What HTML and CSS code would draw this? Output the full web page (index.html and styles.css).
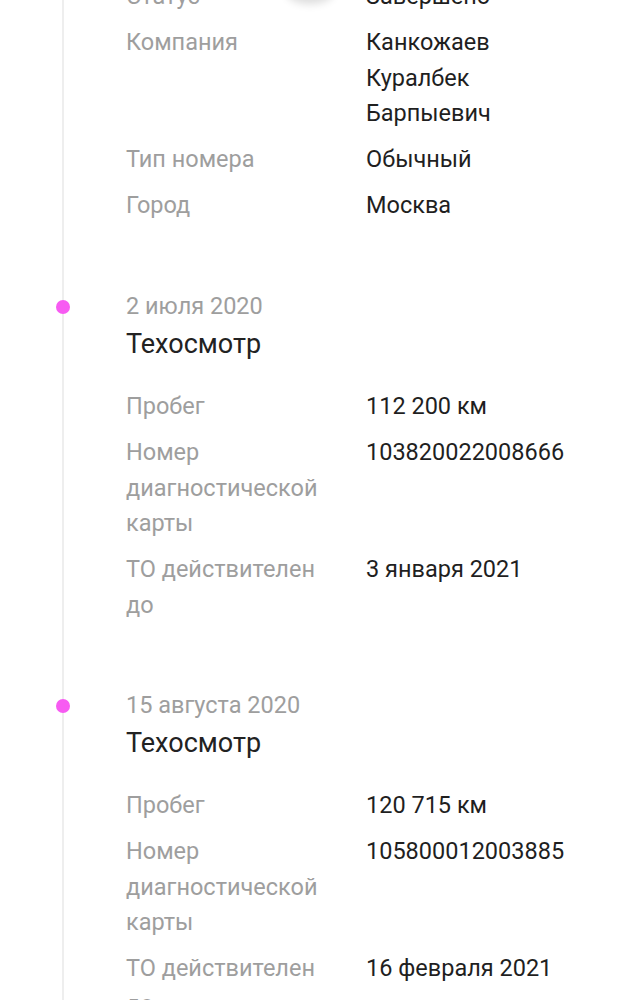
FILE: index.html
```html
<!DOCTYPE html>
<html lang="ru">

<head>
    <meta charset="UTF-8">
    <title>История автомобиля</title>
    <meta name="viewport" content="width=device-width, initial-scale=1.0">
    <link rel="stylesheet" href="styles.css">
</head>

<body>

    <div class="fab-shadow"></div>

    <div class="timeline">

        <section class="event event-first">
            <dl class="details">
                <dt>Статус</dt>
                <dd>Завершено</dd>
                <dt>Компания</dt>
                <dd>Канкожаев Куралбек Барпыевич</dd>
                <dt>Тип номера</dt>
                <dd>Обычный</dd>
                <dt>Город</dt>
                <dd>Москва</dd>
            </dl>
        </section>

        <section class="event">
            <span class="dot"></span>
            <div class="date">2 июля 2020</div>
            <div class="title">Техосмотр</div>
            <dl class="details">
                <dt>Пробег</dt>
                <dd>112 200 км</dd>
                <dt>Номер диагностической карты</dt>
                <dd>103820022008666</dd>
                <dt>ТО действителен до</dt>
                <dd>3 января 2021</dd>
            </dl>
        </section>

        <section class="event">
            <span class="dot"></span>
            <div class="date">15 августа 2020</div>
            <div class="title">Техосмотр</div>
            <dl class="details">
                <dt>Пробег</dt>
                <dd>120 715 км</dd>
                <dt>Номер диагностической карты</dt>
                <dd>105800012003885</dd>
                <dt>ТО действителен до</dt>
                <dd>16 февраля 2021</dd>
            </dl>
        </section>

    </div>

</body>

</html>
```

FILE: styles.css
```css
body {
    margin: 0;
    background: #fff;
    font-family: Roboto, "Noto Sans", sans-serif;
    font-size: 23.5px;
    line-height: 35.3px;
    color: #1f1f1f;
    overflow: hidden;
    position: relative;
}

/* shadow of the floating button sitting just above the viewport */
.fab-shadow {
    position: absolute;
    top: -26px;
    left: 286px;
    width: 48px;
    height: 26px;
    border-radius: 50%;
    background: transparent;
    box-shadow: 0 4px 8px rgba(0, 0, 0, 0.14);
}

.timeline {
    margin-left: 62px;
    margin-top: -21px;
    border-left: 2px solid #eeeeee;
    padding-bottom: 200px;
}

.event {
    position: relative;
    padding-left: 62px;
    padding-right: 32px;
    padding-bottom: 65px;
}

.dot {
    position: absolute;
    left: -8px;
    top: 11px;
    width: 14px;
    height: 14px;
    border-radius: 50%;
    background: #f75bf2;
}

.date {
    color: #9e9e9e;
}

.title {
    font-size: 27px;
    line-height: 40px;
    color: #222;
    margin-bottom: 25px;
}

.details {
    display: grid;
    grid-template-columns: 216px 1fr;
    column-gap: 24px;
    row-gap: 11px;
    margin: 0;
}

.details dt {
    color: #9e9e9e;
}

.details dd {
    margin: 0;
    max-width: 220px;
}
```
